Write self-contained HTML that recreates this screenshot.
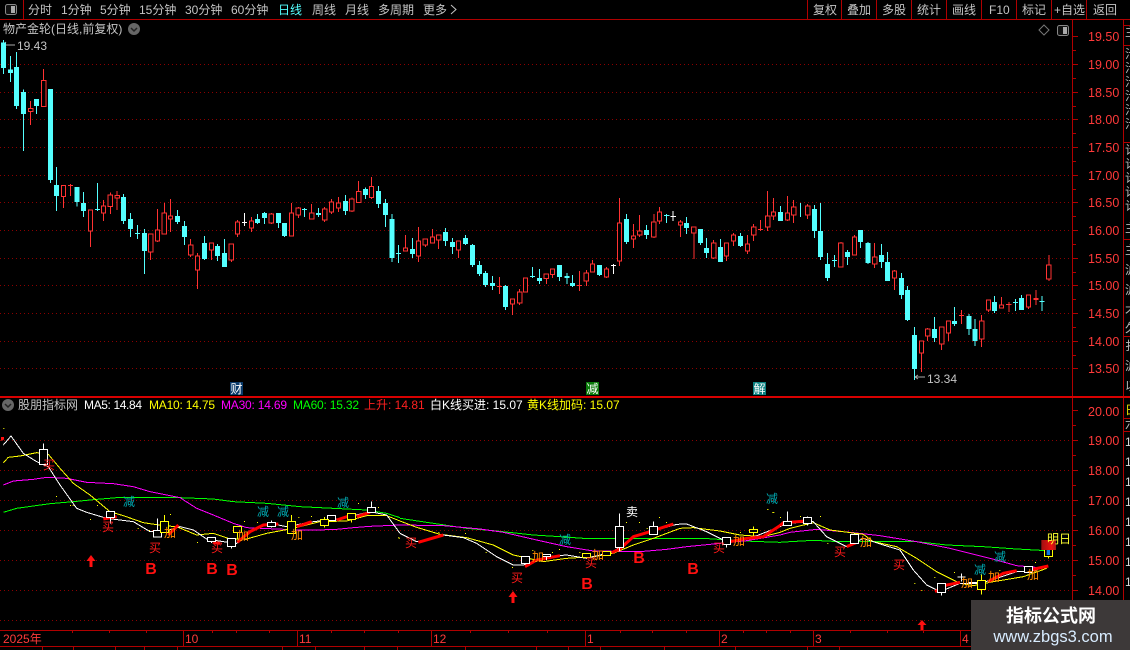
<!DOCTYPE html>
<html><head><meta charset="utf-8"><style>
html,body{margin:0;padding:0;background:#000;width:1130px;height:650px;overflow:hidden}
svg{display:block}
text{font-family:"Liberation Sans","Noto Sans CJK SC",sans-serif;font-size:12px}
polyline{shape-rendering:crispEdges}
.n{vector-effect:non-scaling-stroke;fill:none}
.t{fill:#c4c4c4}
.a{fill:#ff3a3a;font-size:12.5px}
.m{fill:#ff1a1a;text-anchor:middle}.j{fill:#ff8a00;text-anchor:middle}.d{fill:#00a8b0;text-anchor:middle}
.b{fill:#ff1010;font-weight:bold;font-size:16px;text-anchor:middle}
</style></head><body>
<svg width="1130" height="650" viewBox="0 0 1130 650" xmlns="http://www.w3.org/2000/svg">
<defs><linearGradient id="g" x1="0" x2="1"><stop offset="0" stop-color="#a01010"/><stop offset=".7" stop-color="#f01010"/><stop offset="1" stop-color="#a01818"/></linearGradient></defs>
<!-- grid -->
<g stroke="#8c0000" stroke-width="1" stroke-dasharray="1 3" shape-rendering="crispEdges">
<path d="M0 64.5H1072M0 92.5H1072M0 119.5H1072M0 147.5H1072M0 175.5H1072M0 202.5H1072M0 230.5H1072M0 258.5H1072M0 285.5H1072M0 313.5H1072M0 341.5H1072M0 368.5H1072"/>
<path d="M0 440.5H1072M0 470.5H1072M0 500.5H1072M0 530.5H1072M0 560.5H1072M0 590.5H1072M0 620.5H1072"/>
</g>
<!-- frame -->
<g stroke="#b00000" fill="none" shape-rendering="crispEdges">
<path d="M0 19.5H1130M23.5 0V19M807.5 0V19M841.5 0V19M876.5 0V19M911.5 0V19M946.5 0V19M981.5 0V19M1016.5 0V19M1051.5 0V19M1086.5 0V19"/>
<path d="M1072.5 20V630M1123.5 20V630M1123 25.5H1130M1123 45.5H1130M1123 142.5H1130M1123 239.5H1130M1123 336.5H1130M1123 418.5H1130M1123 431.5H1130"/>
<path d="M1073 64.5h5M1073 92.5h5M1073 119.5h5M1073 147.5h5M1073 175.5h5M1073 202.5h5M1073 230.5h5M1073 258.5h5M1073 285.5h5M1073 313.5h5M1073 341.5h5M1073 368.5h5M1073 36.5h5"/>
<path d="M1073 50.5h3M1073 78.5h3M1073 106.5h3M1073 133.5h3M1073 161.5h3M1073 189.5h3M1073 216.5h3M1073 244.5h3M1073 272.5h3M1073 299.5h3M1073 327.5h3M1073 355.5h3"/>
<path d="M1073 410.5h5M1073 440.5h5M1073 470.5h5M1073 500.5h5M1073 530.5h5M1073 560.5h5M1073 590.5h5M1073 620.5h5M1073 425.5h3M1073 455.5h3M1073 485.5h3M1073 515.5h3M1073 545.5h3M1073 575.5h3M1073 605.5h3"/>
<path d="M0 630.5H1072M0 646.5H971"/>
<path d="M183.5 630V646M297.5 630V646M431.5 630V646M585.5 630V646M719.5 630V646M813.5 630V646M960.5 630V646"/>
<path d="M72.5 630v3M109.5 630v3M146.5 630v3M212.5 630v3M236.5 630v3M269.5 630v3M331.5 630v3M364.5 630v3M398.5 630v3M470.5 630v3M508.5 630v3M547.5 630v3M620.5 630v3M652.5 630v3M686.5 630v3M743.5 630v3M766.5 630v3M790.5 630v3M850.5 630v3M887.5 630v3M923.5 630v3"/>
<path d="M42.5 646v4M73.5 646v4M115.5 646v4M144.5 646v4M177.5 646v4M282.5 646v4M315.5 646v4M364.5 646v4M397.5 646v4M465.5 646v4M536.5 646v4M568.5 646v4M600.5 646v4M664.5 646v4M735.5 646v4M807.5 646v4M839.5 646v4"/>
</g>
<rect x="0" y="396" width="1130" height="2" fill="#d80000"/>
<!-- toolbar -->
<rect x="5.5" y="4.5" width="11" height="10" rx="2" fill="#111" stroke="#888"/><rect x="11" y="6" width="4" height="7" fill="#aaa"/>
<g class="t">
<text x="28" y="14" class="t">分时</text><text x="61" y="14" class="t">1分钟</text><text x="100" y="14" class="t">5分钟</text><text x="139" y="14" class="t">15分钟</text><text x="185" y="14" class="t">30分钟</text><text x="231" y="14" class="t">60分钟</text>
<text x="278" y="14" style="fill:#54ffff">日线</text><text x="312" y="14" class="t">周线</text><text x="345" y="14" class="t">月线</text><text x="378" y="14" class="t">多周期</text><text x="423" y="14" class="t">更多</text>
<path d="M451 5l5 4.500-5 4.500" fill="none" stroke="#c4c4c4"/>
<text x="813" y="14" class="t">复权</text><text x="847" y="14" class="t">叠加</text><text x="882" y="14" class="t">多股</text><text x="917" y="14" class="t">统计</text><text x="952" y="14" class="t">画线</text><text x="989" y="14" class="t">F10</text><text x="1022" y="14" class="t">标记</text><text x="1054" y="14" class="t">+自选</text><text x="1093" y="14" class="t">返回</text>
<text x="3" y="33" class="t">物产金轮(日线,前复权)</text>
</g>
<circle cx="134" cy="29" r="6" fill="#666"/><path d="M131 28l3 3 3-3" fill="none" stroke="#222" stroke-width="1.500"/>
<path d="M1044 25l5 5-5 5-5-5z" fill="none" stroke="#777"/>
<rect x="1057.500" y="25.500" width="11" height="10" rx="2" fill="#111" stroke="#888"/><rect x="1063" y="27" width="4" height="7" fill="#aaa"/>
<text x="17" y="50" class="t">19.43</text><path d="M3 45h12M3 45l3-3M3 45l3 3" stroke="#aaa" fill="none"/>
<text x="927" y="383" class="t">13.34</text><path d="M915 377h10M915 377l3-2M915 377l3 2" stroke="#aaa" fill="none"/>
<!-- axis -->
<g class="a">
<text x="1088" y="41" class="a">19.50</text><text x="1088" y="69" class="a">19.00</text><text x="1088" y="97" class="a">18.50</text><text x="1088" y="124" class="a">18.00</text><text x="1088" y="152" class="a">17.50</text><text x="1088" y="180" class="a">17.00</text><text x="1088" y="207" class="a">16.50</text><text x="1088" y="235" class="a">16.00</text><text x="1088" y="263" class="a">15.50</text><text x="1088" y="290" class="a">15.00</text><text x="1088" y="318" class="a">14.50</text><text x="1088" y="346" class="a">14.00</text><text x="1088" y="373" class="a">13.50</text>
<text x="1088" y="416" class="a">20.00</text><text x="1088" y="445" class="a">19.00</text><text x="1088" y="475" class="a">18.00</text><text x="1088" y="505" class="a">17.00</text><text x="1088" y="535" class="a">16.00</text><text x="1088" y="565" class="a">15.00</text><text x="1088" y="595" class="a">14.00</text>
</g>
<g style="fill:#b8b8b8">
<text x="1125" y="36" style="fill:#b8b8b8">主</text><text x="1125" y="58" style="fill:#b8b8b8">汁</text><text x="1125" y="72" style="fill:#b8b8b8">汁</text><text x="1125" y="86" style="fill:#b8b8b8">汁</text><text x="1125" y="100" style="fill:#b8b8b8">汁</text><text x="1125" y="114" style="fill:#b8b8b8">汁</text><text x="1125" y="128" style="fill:#b8b8b8">汁</text><text x="1125" y="154" style="fill:#b8b8b8">计</text><text x="1125" y="168" style="fill:#b8b8b8">计</text><text x="1125" y="182" style="fill:#b8b8b8">计</text><text x="1125" y="196" style="fill:#b8b8b8">计</text><text x="1125" y="210" style="fill:#b8b8b8">计</text><text x="1125" y="232" style="fill:#b8b8b8">主</text>
<text x="1125" y="254" style="fill:#b8b8b8">主</text><text x="1125" y="274" style="fill:#b8b8b8">沪</text><text x="1125" y="294" style="fill:#b8b8b8">沪</text><text x="1125" y="314" style="fill:#b8b8b8">才</text><text x="1125" y="332" style="fill:#b8b8b8">久</text><text x="1125" y="350" style="fill:#b8b8b8">扌</text><text x="1125" y="370" style="fill:#b8b8b8">沪</text><text x="1125" y="390" style="fill:#b8b8b8">以</text>
<text x="1125" y="414" style="fill:#e8e000">日</text><text x="1125" y="428" style="fill:#b8b8b8">六</text><text x="1125" y="446" style="fill:#ddd">1</text><text x="1125" y="466" style="fill:#ddd">1</text><text x="1125" y="486" style="fill:#ddd">1</text><text x="1125" y="506" style="fill:#ddd">1</text><text x="1125" y="526" style="fill:#ddd">1</text><text x="1125" y="546" style="fill:#ddd">1</text><text x="1125" y="566" style="fill:#ddd">1</text><text x="1125" y="586" style="fill:#ddd">1</text>
</g>
<!-- main candles -->
<g transform="scale(.3604 .33333)" shape-rendering="crispEdges">
<path class="n" stroke="#54ffff" stroke-width="1" d="M10 120V222M29 168V246M46 156V327M65 268V453M101 297V342M140 267V549M157 501V633M214 561V620M232 576V651M270 549V633M343 582V672M362 639V711M381 675V717M401 687V822M492 630V672M512 663V735M568 708V780M604 732V783M623 717V801M715 642V672M734 636V672M773 639V684M790 669V711M845 624V651M884 624V651M959 585V645M1014 562V597M1050 558V624M1070 597V681M1087 642V786M1106 735V789M1145 714V774M1236 684V738M1256 714V762M1292 705V735M1311 732V801M1331 783V828M1347 813V861M1367 828V870M1403 855V930M1477 801V834M1497 807V852M1553 795V843M1573 819V852M1589 825V861M1664 795V828M1738 642V732M1794 675V717M1850 642V669M1905 651V702M1944 687V735M1961 714V774M1999 717V786M2055 699V741M2166 618V663M2221 609V651M2260 615V714M2277 609V780M2296 759V843M2316 765V801M2352 750V795M2388 690V744M2408 726V792M2446 732V804M2463 756V843M2502 819V897M2518 858V963M2538 981V1140M2593 951V1026M2649 921V978M2688 942V1005M2705 957V1038M2760 888V939M2818 897V933M2835 885V930M2891 888V933
M263 628h14M374 700h14M838 628h14M1099 760h14M1470 829h14M1843 646h14M2309 781h14M2811 907h14M2884 904h14"/>
<path class="n" stroke="#54ffff" stroke-width="5" d="M10 127V204M29 209V219M46 201V318M65 276V342M101 297V318M140 267V540M157 555V588M214 561V606M232 609V633M343 591V663M362 657V687M401 699V753M492 648V666M512 678V711M568 729V777M604 738V768M623 759V801M715 657V669M734 639V654M773 639V669M790 669V708M884 639V645M959 603V633M1014 567V585M1050 573V612M1070 609V645M1087 657V774M1145 747V762M1236 696V723M1256 726V741M1292 714V732M1311 735V795M1331 795V822M1347 819V855M1367 849V858M1403 858V921M1497 834V843M1553 795V831M1573 828V834M1589 849V858M1664 795V825M1738 657V726M1794 690V705M1905 669V684M1944 687V729M1961 744V759M1999 741V786M2055 708V738M2166 636V663M2260 627V693M2277 693V771M2296 792V834M2352 756V771M2388 690V726M2408 729V789M2446 765V786M2463 786V843M2502 834V885M2518 870V960M2538 1005V1107M2593 987V1014M2649 963V972M2688 948V987M2705 987V1023M2760 906V933M2835 894V930"/>
<path class="n" stroke="#fff" stroke-width="1" d="M678 639V678M671 667h14M1702 792V822M1695 796h14M1868 633V663M1861 649h14"/>
<path class="n" stroke="#ff3232" stroke-width="1" d="M85 303V375M121 207V241M176 590V624M195 552V588M188 557h14M251 693V741M287 600V663M306 578V642M325 573V630M418 756V780M437 627V726M456 609V639M473 597V696M529 717V771M548 759V867M587 750V780M642 780V786M659 660V711M698 651V696M753 639V672M809 609V639M828 621V654M865 612V639M901 621V666M920 597V642M939 591V636M976 593V636M995 543V574M1031 531V597M1125 705V744M1161 681V786M1180 735V741M1200 687V711M1217 720V747M1272 750V774M1386 831V882M1379 859h14M1422 912V945M1442 867V915M1516 836V852M1533 824V834M1608 813V873M1601 856h14M1627 810V858M1644 780V792M1683 801V834M1719 594V798M1758 672V744M1775 645V711M1814 642V714M1830 621V672M1888 660V711M1925 699V777M1980 720V777M2016 768V783M2035 699V738M2074 705V762M2091 672V723M2110 660V693M2103 688h14M2130 573V693M2146 594V660M2185 588V663M2202 600V669M2241 612V657M2333 726V801M2371 705V711M2427 729V804M2482 810V870M2557 1059V1116M2574 984V1023M2613 1032V1050M2632 999V1023M2668 930V972M2661 946h14M2724 945V1041M2743 930V936M2779 891V915M2799 906V936M2792 913h14M2854 921V927M2874 870V915M2867 896h14M2867 899h14M2910 765V843"/>
<path class="n" stroke="#ff3232" stroke-width="1" style="fill:#000" d="M79 325h12V335h-12zM115 241h12V320h-12zM170 556h12V590h-12zM245 630h12V693h-12zM281 618h12V639h-12zM300 585h12V620h-12zM319 586h12V594h-12zM412 702h12V756h-12zM431 690h12V723h-12zM450 639h12V702h-12zM467 648h12V657h-12zM523 735h12V765h-12zM542 768h12V810h-12zM581 729h12V750h-12zM636 732h12V780h-12zM653 666h12V702h-12zM692 663h12V684h-12zM747 642h12V669h-12zM803 639h12V708h-12zM822 624h12V645h-12zM859 639h12V657h-12zM895 627h12V660h-12zM914 606h12V636h-12zM933 609h12V624h-12zM970 597h12V633h-12zM989 574h12V608h-12zM1025 559h12V593h-12zM1119 744h12V753h-12zM1155 723h12V768h-12zM1174 717h12V735h-12zM1194 711h12V729h-12zM1211 705h12V720h-12zM1266 723h12V750h-12zM1416 897h12V912h-12zM1436 876h12V909h-12zM1452 834h12V876h-12zM1510 822h12V836h-12zM1527 807h12V824h-12zM1621 819h12V843h-12zM1638 792h12V816h-12zM1677 807h12V831h-12zM1713 669h12V783h-12zM1752 708h12V717h-12zM1769 693h12V705h-12zM1808 666h12V711h-12zM1824 636h12V663h-12zM1882 666h12V675h-12zM1919 681h12V699h-12zM1974 729h12V774h-12zM2010 729h12V768h-12zM2029 705h12V723h-12zM2068 732h12V753h-12zM2085 681h12V705h-12zM2124 648h12V681h-12zM2140 636h12V648h-12zM2179 639h12V660h-12zM2196 621h12V645h-12zM2235 618h12V645h-12zM2327 729h12V801h-12zM2365 711h12V765h-12zM2421 771h12V792h-12zM2476 813h12V834h-12zM2551 1023h12V1059h-12zM2568 987h12V1008h-12zM2607 981h12V1032h-12zM2626 963h12V999h-12zM2718 963h12V1017h-12zM2737 900h12V930h-12zM2773 915h12V924h-12zM2848 885h12V921h-12zM2904 795h12V837h-12z"/>
</g>
<!-- markers -->
<rect x="230" y="382" width="13" height="13" fill="#0a3a6a"/><text x="230.500" y="393" style="fill:#fff">财</text>
<rect x="586" y="382" width="13" height="13" fill="#0a7a0a"/><text x="586.500" y="393" style="fill:#fff">减</text>
<rect x="753" y="382" width="13" height="13" fill="#0a8080"/><text x="753.500" y="393" style="fill:#fff">解</text>
<!-- legend -->
<circle cx="8" cy="405" r="6" fill="#666"/><path d="M5 404l3 3 3-3" fill="none" stroke="#222" stroke-width="1.500"/>
<text x="18" y="409" class="t">股朋指标网</text>
<text x="84" y="409" style="fill:#fff" textLength="58">MA5: 14.84</text>
<text x="149" y="409" style="fill:#ffff00" textLength="66">MA10: 14.75</text>
<text x="221" y="409" style="fill:#ff00ff" textLength="66">MA30: 14.69</text>
<text x="293" y="409" style="fill:#00ff00" textLength="66">MA60: 15.32</text>
<text x="364" y="409" style="fill:#ff2020">上升: 14.81</text>
<text x="430" y="409" style="fill:#fff">白K线买进: 15.07</text>
<text x="527" y="409" style="fill:#ffff00">黄K线加码: 15.07</text>
<!-- lower panel z5 -->
<g transform="translate(0 395) scale(.33333)">
<polyline class="n" stroke="#00ff00" points="10,352 50,340 100,333 150,326 220,320 280,314 350,308 540,308 640,312 700,320 800,325 900,335 1000,340 1100,345 1160,355 1200,368"/>
<polyline class="n" stroke="#ff00ff" points="10,270 40,258 100,253 140,247 200,250 260,262 340,266 400,275 450,290 540,308 590,340 640,360 700,385 740,398 830,402 900,405 1000,404 1060,398 1110,394 1200,390"/>
<polyline class="n" stroke="#ffff00" points="10,203 25,187 60,183 110,173 145,178 180,220 220,265 270,300 330,350 370,362 430,383 490,392 530,395 590,420 640,415 690,432 740,432 800,415 880,400 960,380 1040,378 1100,362 1160,362 1200,378"/>
<polyline class="n" stroke="#fff" points="10,150 33,123 70,175 110,200 145,215 180,270 230,340 260,352 320,370 400,380 450,410 490,410 540,395 580,405 620,432 670,440 710,445 760,405 810,385 860,395 940,380 1030,370 1110,350 1160,360 1200,415"/>
<path class="n" stroke="#ff0000" stroke-width="3" d="M310 372L350 365M505 420L535 390M640 443L660 445M712 442L750 410 790 390 835 387M890 395L935 380M1010 375L1050 362M1070 365L1110 352"/>
<path class="n" stroke="#fff" shape-rendering="crispEdges" d="M131 145V163M332 368V385M472 370V406M634 440V444M694 455V460M815 376V382M815 394V398M1114 319V337"/>
<path class="n" stroke="#ff0" shape-rendering="crispEdges" d="M493 360V379M712 413V430M874 360V379M973 366V374M973 391V398M1054 374V382"/>
<g class="n" stroke="#fff" shape-rendering="crispEdges"><rect class="n" x="119" y="163" width="24" height="45" style="fill:#000"/><rect class="n" x="320" y="350" width="24" height="18" style="fill:#000"/><rect class="n" x="460" y="406" width="25" height="20" style="fill:#000"/><rect class="n" x="622" y="427" width="24" height="13" style="fill:#000"/><rect class="n" x="682" y="431" width="24" height="24" style="fill:#000"/><rect class="n" x="803" y="382" width="24" height="12" style="fill:#000"/><rect class="n" x="982" y="361" width="24" height="15" style="fill:#000"/><rect class="n" x="1102" y="337" width="24" height="15" style="fill:#000"/></g>
<g class="n" stroke="#ff0" shape-rendering="crispEdges"><rect class="n" x="481" y="379" width="24" height="34" style="fill:#000"/><rect class="n" x="700" y="394" width="24" height="19" style="fill:#000"/><rect class="n" x="862" y="379" width="24" height="36" style="fill:#000"/><rect class="n" x="962" y="374" width="23" height="17" style="fill:#000"/><rect class="n" x="1042" y="355" width="24" height="19" style="fill:#000"/></g>
<path d="M3 126h9v7l-5 4h-4z" fill="#ff1010"/>
<path fill="#ff0" d="M10 99h3v3h-3zM168 303h3v3h-3zM210 330h3v3h-3zM218 330h3v3h-3zM291 330h3v3h-3zM270 372h3v3h-3zM413 399h3v3h-3zM510 357h3v3h-3zM447 405h3v3h-3zM591 441h3v3h-3zM732 378h3v3h-3zM771 381h3v3h-3zM895 366h3v3h-3zM933 363h3v3h-3zM1074 324h3v3h-3zM1196 429h3v3h-3zM1134 336h3v3h-3z"/>
</g>
<!-- lower panel z6 -->
<g transform="translate(380 395) scale(.33333)">
<polyline class="n" stroke="#00ff00" points="60,370 160,385 260,400 350,408 460,420 540,425 610,430 970,430 1090,438 1200,442"/>
<polyline class="n" stroke="#ff00ff" points="60,390 190,392 300,402 370,412 470,435 560,455 640,468 780,470 860,463 920,455 1000,447 1100,437 1200,420"/>
<polyline class="n" stroke="#ffff00" points="60,378 110,397 180,418 260,428 340,450 400,480 490,500 560,490 640,485 700,475 760,450 820,430 900,400 940,398 1020,408 1080,420 1150,425 1200,412"/>
<polyline class="n" stroke="#fff" points="60,415 110,440 190,420 250,428 290,445 350,485 400,510 430,510 500,485 560,480 620,490 700,470 760,425 830,405 890,388 920,387 980,410 1040,440 1110,430 1200,395"/>
<path class="n" stroke="#ff0000" stroke-width="3" d="M115 442L190 420M435 515L470 495 540 482M695 473L720 462 760 425 810 410 840 400 880 387M1050 440L1100 430 1150 425 1200 392"/>
<path class="n" stroke="#fff" shape-rendering="crispEdges" d="M718 355V394M718 457V468M820 379V394M1039 448V458M500 484V495"/>
<path class="n" stroke="#ff0" shape-rendering="crispEdges" d="M1120 394V403M1120 412V421"/>
<g shape-rendering="crispEdges"><rect class="n" stroke="#fff" x="424" y="484" width="24" height="21" style="fill:#000"/><rect class="n" stroke="#fff" x="487" y="478" width="25" height="6" style="fill:#000"/><rect class="n" stroke="#fff" x="706" y="394" width="24" height="63" style="fill:#000"/><rect class="n" stroke="#fff" x="808" y="394" width="24" height="24" style="fill:#000"/><rect class="n" stroke="#fff" x="1027" y="427" width="24" height="21" style="fill:#000"/>
<rect class="n" stroke="#ff0" x="607" y="475" width="24" height="12" style="fill:#000"/><rect class="n" stroke="#ff0" x="667" y="469" width="24" height="12" style="fill:#000"/><rect class="n" stroke="#ff0" x="1108" y="403" width="24" height="9" style="fill:#000"/></g>
<path fill="#ff0" d="M55 426h3v3h-3zM175 411h3v3h-3zM255 414h3v3h-3zM317 471h3v3h-3zM396 516h3v3h-3zM457 465h3v3h-3zM516 471h3v3h-3zM537 462h3v3h-3zM598 471h3v3h-3zM738 381h3v3h-3zM777 381h3v3h-3zM800 399h3v3h-3zM837 366h3v3h-3zM858 381h3v3h-3zM1080 411h3v3h-3zM1162 342h3v3h-3zM1180 351h3v3h-3z"/>
</g>
<!-- lower panel z7 -->
<g transform="translate(730 395) scale(.33333)">
<polyline class="n" stroke="#00ff00" points="150,442 180,440 250,436 330,440 560,440 650,450 760,455 860,462 950,467"/>
<polyline class="n" stroke="#ff00ff" points="150,420 180,412 260,403 360,412 450,422 560,440 660,460 780,490 860,512 950,520"/>
<polyline class="n" stroke="#ffff00" points="150,412 180,400 250,383 300,405 400,418 430,440 500,455 560,490 620,530 690,565 730,572 790,560 880,545 950,520"/>
<polyline class="n" stroke="#fff" points="150,395 170,385 250,380 290,425 350,455 400,430 460,450 510,465 550,525 590,570 630,590 690,565 750,565 800,550 860,530 900,530 950,515"/>
<path class="n" stroke="#ff0000" stroke-width="3" d="M150 392L160 383 230 378M350 455L380 442M615 590L650 570 690 562M775 560L820 535 860 527M900 525L955 513"/>
<path class="n" stroke="#fff" shape-rendering="crispEdges" d="M172 349V379M232 364V367M232 385V391M373 415V418M634 592V601M682 546H706M694 535V560M714 563H742"/>
<path class="n" stroke="#ff0" shape-rendering="crispEdges" d="M754 539V556M754 583V598M955 484V490"/>
<g shape-rendering="crispEdges"><rect class="n" stroke="#fff" x="160" y="379" width="24" height="12" style="fill:#000"/><rect class="n" stroke="#fff" x="220" y="367" width="24" height="18" style="fill:#000"/><rect class="n" stroke="#fff" x="361" y="418" width="24" height="27" style="fill:#000"/><rect class="n" stroke="#fff" x="622" y="565" width="24" height="27" style="fill:#000"/><rect class="n" stroke="#fff" x="883" y="514" width="24" height="18" style="fill:#000"/>
<rect class="n" stroke="#ff0" x="742" y="556" width="24" height="27" style="fill:#000"/><rect class="n" stroke="#ff0" x="943" y="460" width="24" height="24" style="fill:#000"/></g>
<rect x="950" y="465" width="10" height="15" fill="#0a7ae0"/>
<rect x="934" y="435" width="44" height="30" fill="url(#g)"/>
<path fill="#ff0" d="M112 342h3v3h-3zM127 351h3v3h-3zM150 366h3v3h-3zM210 363h3v3h-3zM270 363h3v3h-3zM292 444h3v3h-3zM553 564h3v3h-3zM574 585h3v3h-3zM613 546h3v3h-3zM672 531h3v3h-3zM808 525h3v3h-3zM915 501h3v3h-3z"/>
</g>
<!-- signals -->
<text x="49" y="469" class="m">买</text><text x="108" y="531" class="m">买</text><text x="155" y="552" class="m">买</text><text x="217" y="552" class="m">买</text><text x="411" y="547" class="m">买</text><text x="517" y="582" class="m">买</text><text x="591" y="567" class="m">买</text><text x="719" y="552" class="m">买</text><text x="840" y="556" class="m">买</text><text x="899" y="569" class="m">买</text>
<text x="170" y="537" class="j">加</text><text x="243" y="540" class="j">加</text><text x="297" y="539" class="j">加</text><text x="538" y="561" class="j">加</text><text x="598" y="559" class="j">加</text><text x="739" y="545" class="j">加</text><text x="866" y="546" class="j">加</text><text x="967" y="587" class="j">加</text><text x="994" y="581" class="j">加</text><text x="1033" y="579" class="j">加</text>
<text x="129" y="506" class="d">减</text><text x="263" y="516" class="d">减</text><text x="283" y="516" class="d">减</text><text x="343" y="507" class="d">减</text><text x="565" y="544" class="d">减</text><text x="772" y="503" class="d">减</text><text x="980" y="574" class="d">减</text><text x="1000" y="561" class="d">减</text>
<text x="632" y="516" style="fill:#fff;text-anchor:middle">卖</text>
<text x="151" y="574" class="b">B</text><text x="212" y="574" class="b">B</text><text x="232" y="575" class="b">B</text><text x="587" y="589" class="b">B</text><text x="639" y="563" class="b">B</text><text x="693" y="574" class="b">B</text>
<path fill="#ff1010" d="M91 555l4.500 6h-3v6h-3v-6h-3zM513 591l4.500 6h-3v6h-3v-6h-3zM922 620l4.500 5h-3v5h-3v-5h-3z"/>
<text x="1047" y="543" style="fill:#ffff30">明日</text>
<!-- date labels -->
<text x="3" y="643" style="fill:#ff3a3a">2025年</text><text x="185" y="643" style="fill:#ff3a3a">10</text><text x="299" y="643" style="fill:#ff3a3a">11</text><text x="433" y="643" style="fill:#ff3a3a">12</text><text x="587" y="643" style="fill:#ff3a3a">1</text><text x="721" y="643" style="fill:#ff3a3a">2</text><text x="815" y="643" style="fill:#ff3a3a">3</text><text x="962" y="643" style="fill:#ff3a3a">4</text>
<!-- watermark -->
<rect x="971" y="600" width="159" height="50" fill="#3d3939"/>
<text x="1051" y="622" style="fill:#fff;font-size:18px;font-weight:bold;text-anchor:middle">指标公式网</text>
<text x="1053" y="642" style="fill:#d8ecff;font-size:16.500px;text-anchor:middle">www.zbgs3.com</text>
</svg>
</body></html>
